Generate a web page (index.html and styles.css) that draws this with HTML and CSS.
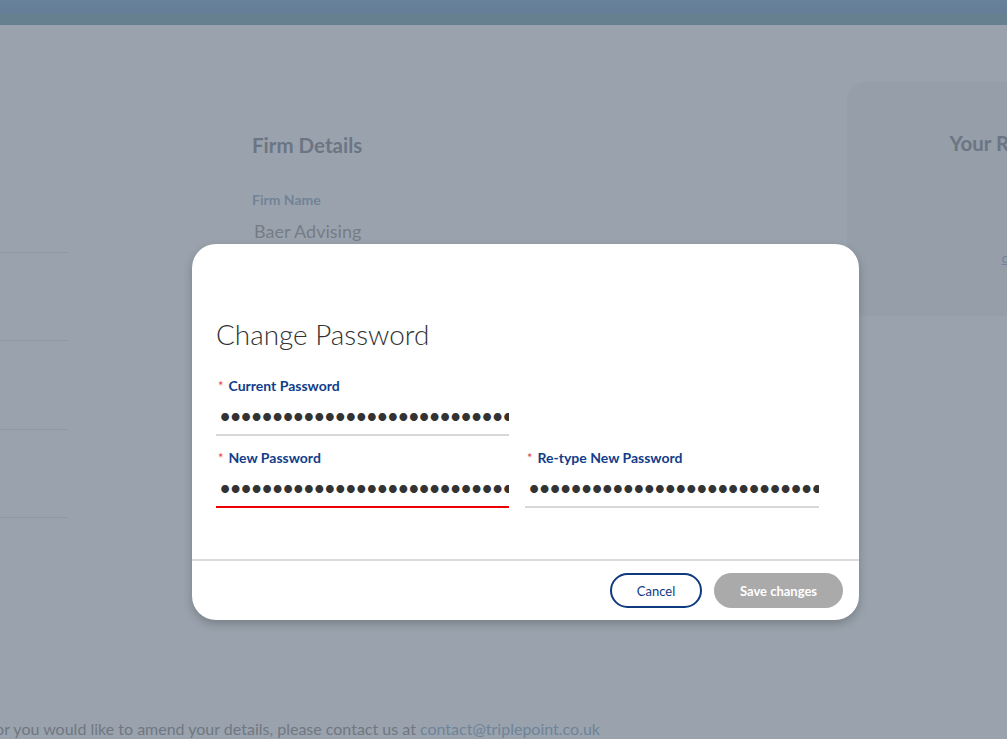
FILE: index.html
```html
<!DOCTYPE html>
<html lang="en">
<head>
<meta charset="utf-8">
<title>Change Password</title>
<link rel="stylesheet" href="styles.css">
</head>
<body>
<header class="topbar"></header>
<div class="page">
  <aside class="sidebar">
    <div class="side-item"></div>
    <div class="side-item"></div>
    <div class="side-item"></div>
    <div class="side-item"></div>
  </aside>
  <main class="details">
    <h2 class="section-title">Firm Details</h2>
    <div class="field-label">Firm Name</div>
    <div class="field-value">Baer Advising</div>
  </main>
  <section class="rm-card">
    <h2 class="rm-title">Your Relationship Manager</h2>
    <a class="rm-link" href="#">contact@triplepoint.co.uk</a>
  </section>
</div>
<footer class="page-footer">
  <p class="footer-text">If any of these details are incorrect or you would like to amend your details, please contact us at <a href="#">contact@triplepoint.co.uk</a></p>
</footer>

<div class="overlay"></div>

<div class="modal" role="dialog">
  <div class="modal-body">
    <h1 class="modal-title">Change Password</h1>
    <div class="form-row">
      <label class="form-field">
        <span class="form-label"><span class="req">*</span>Current Password</span>
        <input class="pw-input" type="password" value="passwordpasswordpasswordpassword" readonly>
      </label>
    </div>
    <div class="form-row">
      <label class="form-field">
        <span class="form-label"><span class="req">*</span>New Password</span>
        <input class="pw-input error" type="password" value="passwordpasswordpasswordpassword" readonly>
      </label>
      <label class="form-field">
        <span class="form-label"><span class="req">*</span>Re-type New Password</span>
        <input class="pw-input" type="password" value="passwordpasswordpasswordpassword" readonly>
      </label>
    </div>
  </div>
  <div class="modal-footer">
    <button class="btn btn-outline" type="button">Cancel</button>
    <button class="btn btn-disabled" type="button">Save changes</button>
  </div>
</div>
</body>
</html>
```

FILE: styles.css
```css
* { box-sizing: border-box; }

html, body {
  margin: 0;
  padding: 0;
  height: 100%;
}

body {
  font-family: Lato, "Open Sans", Arial, sans-serif;
  background: #ffffff;
  overflow: hidden;
  position: relative;
  width: 1007px;
  height: 739px;
}

.topbar {
  height: 25px;
  background: linear-gradient(#9abbd9 0%, #97b2d2 50%, #97b8c5 55%, #97b8c5 100%);
}

.page {
  display: flex;
  align-items: flex-start;
  height: 694px;
}

.sidebar {
  width: 68px;
  padding-top: 227px;
  flex: none;
}

.side-item {
  height: 88.3px;
  border-bottom: 1px solid #ebe9e9;
}
.side-item:nth-child(1) { height: 1px; }

.details {
  margin-left: 184px;
  padding-top: 108px;
  width: 400px;
  flex: none;
}

.section-title {
  margin: 0;
  font-size: 20.5px;
  line-height: 24px;
  font-weight: 700;
  color: #a3a3ab;
}

.field-label {
  margin-top: 34px;
  font-size: 14px;
  line-height: 18px;
  font-weight: 700;
  color: #aebdd3;
}

.field-value {
  margin-top: 11px;
  padding-left: 2px;
  font-size: 18px;
  line-height: 22px;
  color: #b5b1af;
}

.rm-card {
  margin-left: 195px;
  margin-top: 57px;
  width: 450px;
  height: 234px;
  flex: none;
  background: #f4f5f7;
  border-radius: 18px;
  text-align: center;
  padding-top: 49px;
}

.rm-title {
  margin: 0;
  font-size: 20.5px;
  line-height: 24px;
  font-weight: 700;
  color: #a3a3ab;
}

.rm-link {
  display: inline-block;
  margin-top: 96px;
  font-size: 12.5px;
  color: #a9bfdd;
}

.page-footer {
  display: flex;
  justify-content: flex-end;
  width: 600px;
}

.footer-text {
  margin: 0;
  white-space: nowrap;
  font-size: 16px;
  line-height: 20px;
  color: #aaa7a7;
}
.footer-text a {
  color: #a6c0d6;
  text-decoration: none;
}

.overlay {
  position: absolute;
  inset: 0;
  background: rgba(53, 71, 91, 0.5);
}

.modal {
  position: absolute;
  left: 192px;
  top: 244px;
  width: 667px;
  height: 376px;
  background: #ffffff;
  border-radius: 24px;
  box-shadow: 0 4px 10px rgba(0, 0, 0, 0.22);
  display: flex;
  flex-direction: column;
}

.modal-body {
  padding: 73px 40px 50px 24px;
  flex: 1;
}

.modal-title {
  margin: 0 0 26px 0;
  font-size: 27.9px;
  line-height: 34px;
  font-weight: 300;
  color: #333333;
}

.form-row {
  display: flex;
  gap: 16px;
  margin-bottom: 13px;
}
.form-row:last-child { margin-bottom: 0; }

.form-field {
  display: flex;
  flex-direction: column;
  width: 293px;
}
.form-field + .form-field { width: 294px; }

.form-label {
  font-size: 14px;
  line-height: 18px;
  font-weight: 700;
  color: #113d8a;
  padding-left: 2px;
}

.req {
  color: #e04444;
  font-weight: 400;
  font-size: 13px;
  margin-right: 5px;
}

.pw-input {
  height: 41px;
  width: 100%;
  border: 0;
  border-bottom: 2px solid #d8d8d8;
  padding: 2px 0 0 3px;
  font-family: Lato, Arial, sans-serif;
  font-size: 21px;
  letter-spacing: -1.7px;
  color: #333333;
  outline: none;
  background: transparent;
}
.pw-input.error { border-bottom-color: #ee0000; }

.modal-footer {
  border-top: 2px solid #dcdcdc;
  display: flex;
  justify-content: flex-end;
  gap: 12px;
  padding: 12px 16px 12px 0;
}

.btn {
  height: 35px;
  border-radius: 18px;
  font-family: Lato, Arial, sans-serif;
  font-size: 13px;
  cursor: pointer;
}

.btn-outline {
  width: 92px;
  background: #ffffff;
  border: 2px solid #0f3a80;
  color: #0f3a80;
}

.btn-disabled {
  width: 129px;
  background: #aaaaaa;
  border: 0;
  color: #ffffff;
  font-weight: 700;
}
```
